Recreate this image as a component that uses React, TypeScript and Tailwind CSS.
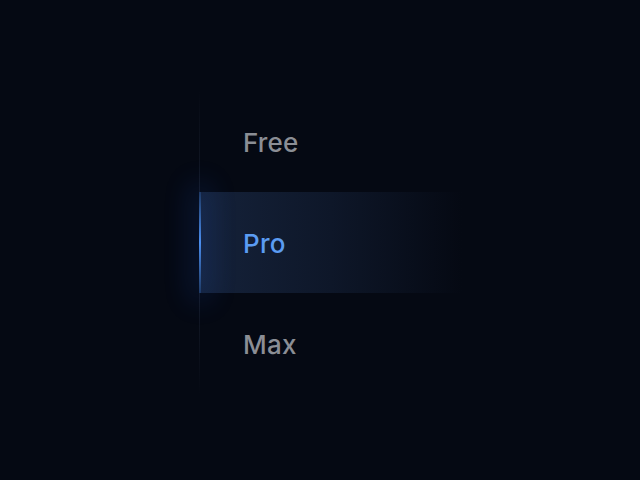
import React from 'react';

const plans = ['Free', 'Pro', 'Max'];

export default function App() {
  const active = 'Pro';
  return (
    <div className="h-[480px] w-full bg-[#050913] pl-[199px] pt-[91px] font-['Inter',sans-serif]">
      <div className="flex">
        {/* rail */}
        <div className="w-px h-[303px] bg-gradient-to-b from-transparent via-[#1c2333] to-transparent" />
        <ul className="w-[262px]">
          {plans.map((plan) => {
            const on = plan === active;
            return (
              <li
                key={plan}
                className={
                  on
                    ? 'relative flex h-[101px] items-center pl-[43px] pt-[2px] bg-gradient-to-r from-[#15223a] via-[#0e1729] to-transparent'
                    : 'flex h-[101px] items-center pl-[43px] pt-[2px]'
                }
              >
                {on && (
                  <span className="absolute -left-px top-0 h-full w-[2px] bg-gradient-to-b from-[#1e3a66] via-[#4b8ff0] to-[#1e3a66] shadow-[0_0_28px_8px_rgba(37,99,235,0.18)]" />
                )}
                <span
                  className={
                    on
                      ? 'text-[26px] font-medium tracking-[0.2px] text-[#5b9cf2]'
                      : 'text-[26px] font-medium tracking-[0.2px] text-[#8b8e95]'
                  }
                >
                  {plan}
                </span>
              </li>
            );
          })}
        </ul>
      </div>
    </div>
  );
}
